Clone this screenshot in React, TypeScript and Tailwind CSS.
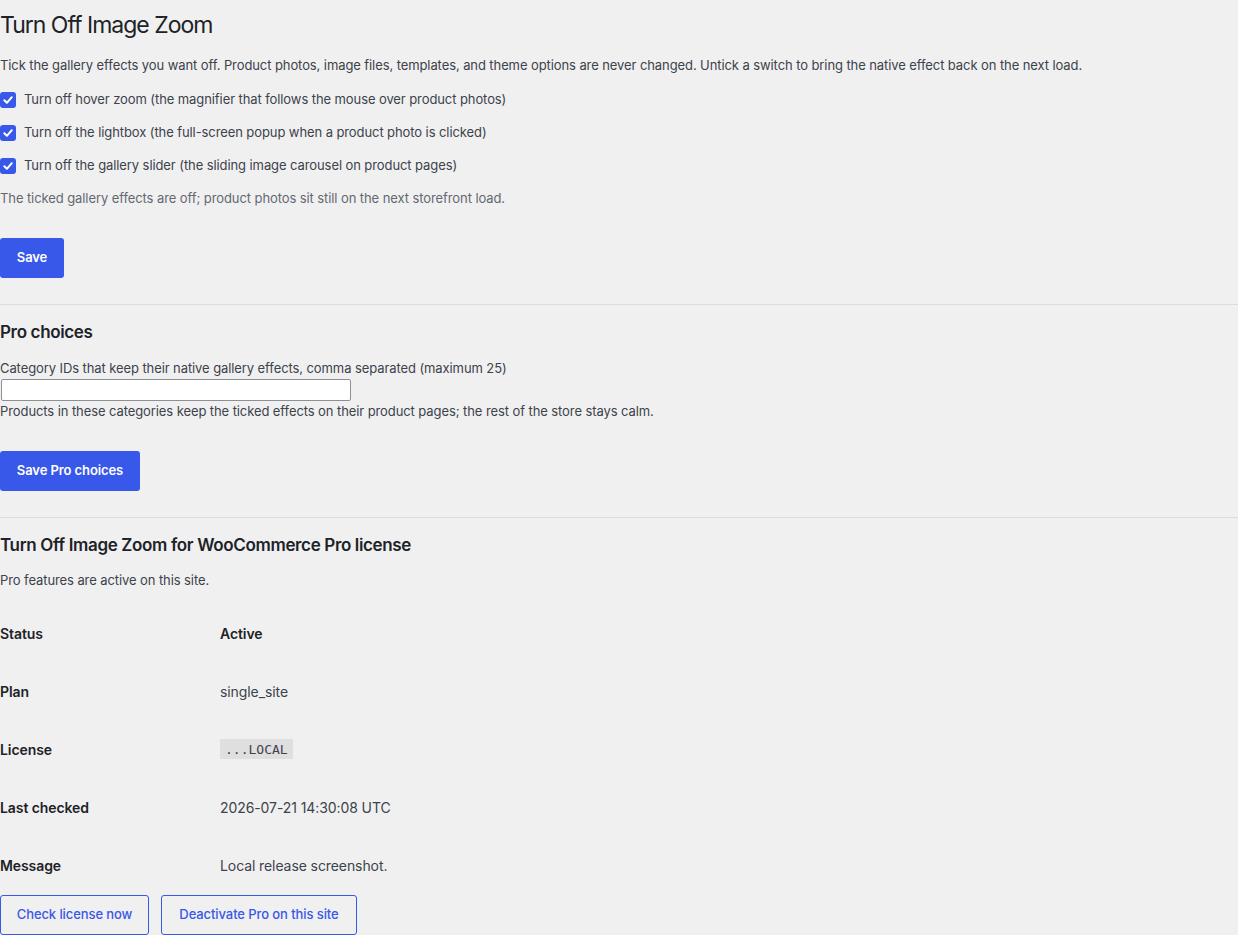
import React from 'react'

const font = { fontFamily: 'Inter, "Noto Sans", sans-serif' }

const effects = [
    'Turn off hover zoom (the magnifier that follows the mouse over product photos)',
    'Turn off the lightbox (the full-screen popup when a product photo is clicked)',
    'Turn off the gallery slider (the sliding image carousel on product pages)',
]

const Tick: React.FC = () => (
    <span className='flex h-4 w-4 items-center justify-center rounded-[3px] bg-[#3858e9]'>
        <svg width="12" height="12" viewBox="0 0 12 12" fill="none">
            <path d="M2.3 6.2 L4.9 8.8 L9.8 3.2" stroke="white" strokeWidth="2" strokeLinecap="round" strokeLinejoin="round" />
        </svg>
    </span>
)

const rows: { label: string; value: React.ReactNode }[] = [
    { label: 'Status', value: <span className='font-semibold text-[#1d2327]'>Active</span> },
    { label: 'Plan', value: 'single_site' },
    {
        label: 'License',
        value: (
            <code className='bg-[#dfdfe0] px-[5px] pt-[3px] pb-[2px] text-[13px] tracking-normal text-[#3c434a]' style={{ fontFamily: '"DejaVu Sans Mono", "Liberation Mono", monospace' }}>
                ...LOCAL
            </code>
        ),
    },
    { label: 'Last checked', value: '2026-07-21 14:30:08 UTC' },
    { label: 'Message', value: 'Local release screenshot.' },
]

const App: React.FC = () => {
    return (
        <div className='min-h-[935px] w-[1238px] overflow-hidden bg-[#f0f0f1] text-[13px] tracking-[-0.09px] text-[#3c434a]' style={font}>
            <h1 className='mt-[10px] text-[23px] leading-[30px] font-normal tracking-[-1px] text-[#1d2327]'>Turn Off Image Zoom</h1>
            <p className='mt-[15px] leading-5'>
                Tick the gallery effects you want off. Product photos, image files, templates, and theme options are never changed. Untick a switch to bring the native effect back on the next load.
            </p>
            <div className='mt-[8px] flex flex-col'>
                {effects.map(e => (
                    <label key={e} className='flex h-[33px] items-center gap-2'>
                        <Tick />
                        <span>{e}</span>
                    </label>
                ))}
            </div>
            <p className='mt-[6px] leading-5 text-[#646970]'>
                The ticked gallery effects are off; product photos sit still on the next storefront load.
            </p>
            <button className='mt-[30px] h-10 w-16 rounded-[3px] bg-[#3858e9] text-[13px] font-semibold text-white'>Save</button>

            <div className='mt-[26px] h-px w-full bg-[#dcdcde]'></div>

            <h2 className='mt-[16px] text-[17px] leading-[22px] font-semibold tracking-[-0.35px] text-[#1d2327]'>Pro choices</h2>
            <p className='mt-[15px] leading-5'>Category IDs that keep their native gallery effects, comma separated (maximum 25)</p>
            <input type="text" className='mt-px ml-px block h-[22px] w-[350px] rounded-[2px] border border-[#8c8f94] bg-white' />
            <p className='leading-5'>Products in these categories keep the ticked effects on their product pages; the rest of the store stays calm.</p>
            <button className='mt-[30px] h-10 w-[140px] rounded-[3px] bg-[#3858e9] text-[13px] font-semibold text-white'>Save Pro choices</button>

            <div className='mt-[26px] h-px w-full bg-[#dcdcde]'></div>

            <h2 className='mt-[16px] text-[17px] leading-[22px] font-semibold tracking-[-0.35px] text-[#1d2327]'>Turn Off Image Zoom for WooCommerce Pro license</h2>
            <p className='mt-[14px] leading-5'>Pro features are active on this site.</p>
            <div className='mt-[14px] flex flex-col text-[14px]'>
                {rows.map(r => (
                    <div key={r.label} className='flex h-[58px] items-center'>
                        <div className='w-[220px] font-semibold text-[#1d2327]'>{r.label}</div>
                        <div>{r.value}</div>
                    </div>
                ))}
            </div>
            <div className='mt-px flex gap-3'>
                <button className='h-10 w-[149px] rounded-[3px] border border-[#3858e9] text-[13px] font-medium text-[#3858e9]'>Check license now</button>
                <button className='h-10 w-[196px] rounded-[3px] border border-[#3858e9] text-[13px] font-medium text-[#3858e9]'>Deactivate Pro on this site</button>
            </div>
        </div>
    )
}

export default App
